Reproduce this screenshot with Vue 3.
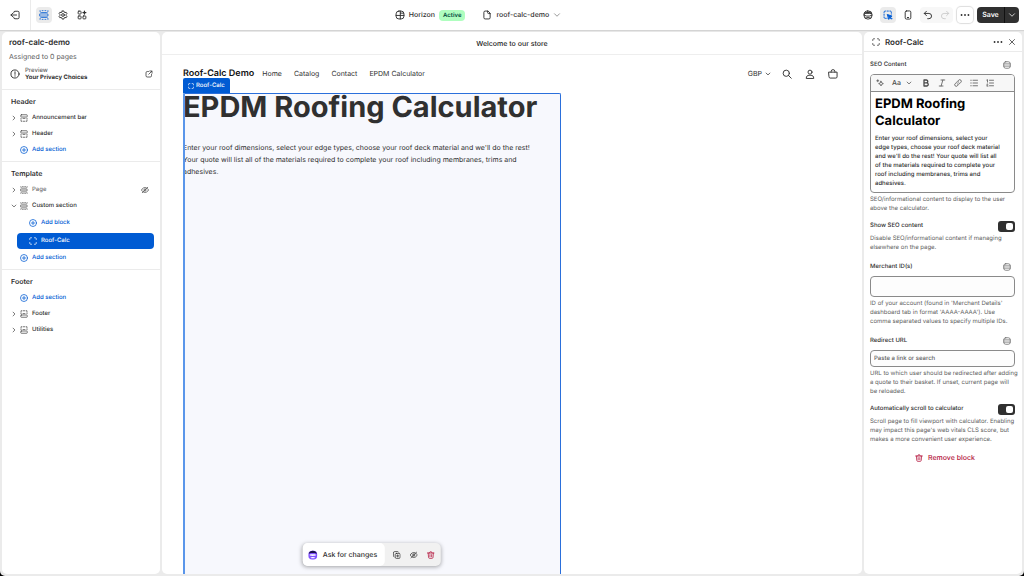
<template>
  <div class="editor">
    <svg class="sprite" aria-hidden="true">
      <symbol id="i-exit" viewBox="0 0 16 16"><path d="M6 4.500V4a2 2 0 0 1 2-2h4.500a2 2 0 0 1 2 2v8a2 2 0 0 1-2 2H8a2 2 0 0 1-2-2v-.5M10.500 8H1.500M4.500 5l-3 3 3 3" /></symbol>
      <symbol id="i-sections" viewBox="0 0 16 16"><path d="M1.700 1v1.200C1.700 3.200 2.500 4 3.500 4h9c1 0 1.800-.8 1.800-1.800V1M1.700 15v-1.200c0-1 .8-1.800 1.800-1.800h9c1 0 1.800.8 1.800 1.800V15M5 1h1.500M9.500 1H11M5 15h1.500M9.500 15H11M1.700 6.300h12.600v3.400H1.700z" stroke-width="1.200" /></symbol>
      <symbol id="i-top" viewBox="0 0 16 16"><rect x="1.500" y="1.500" width="13" height="4.500" rx="1.200" /><path d="M2 8.500v2M2 13v1.500h2M14 8.500v2M14 13v1.500h-2M6.800 14.500h2.400M6 8.800h4" /></symbol>
      <symbol id="i-bottom" viewBox="0 0 16 16"><rect x="1.500" y="10" width="13" height="4.500" rx="1.200" /><path d="M2 7.500v-2M2 3V1.500h2M14 7.500v-2M14 3V1.500h-2M6.800 1.500h2.400M6 7.200h4" /></symbol>
      <symbol id="i-gear" viewBox="0 0 16 16"><path d="M6.700 1.500h2.600l.5 1.900 1.300.8 1.900-.6 1.300 2.300L12.900 7.300v1.400l1.400 1.400-1.300 2.300-1.900-.6-1.300.8-.5 1.900H6.700l-.5-1.900-1.300-.8-1.900.6-1.300-2.300 1.400-1.400V7.300L1.700 5.900 3 3.600l1.900.6 1.300-.8z" /><circle cx="8" cy="8" r="2.200" /></symbol>
      <symbol id="i-apps" viewBox="0 0 16 16"><rect x="1.800" y="1.800" width="4.700" height="4.700" rx="1.200" /><rect x="1.800" y="9.500" width="4.700" height="4.700" rx="1.200" /><rect x="9.500" y="9.500" width="4.700" height="4.700" rx="1.200" /><path d="M11.900 1.800v4.700M9.500 4.150h4.700" stroke-width="2" /></symbol>
      <symbol id="i-theme" viewBox="0 0 16 16"><rect x="1.700" y="1.700" width="12.600" height="12.600" rx="4.500" /><path d="M8.500 1.700v12.600M1.700 8.700h12.600M8.500 5h5.300" /></symbol>
      <symbol id="i-file" viewBox="0 0 16 16"><path d="M9 1.700H5a2 2 0 0 0-2 2v8.600a2 2 0 0 0 2 2h6a2 2 0 0 0 2-2V5.700zM9 1.700v2.500a1.500 1.500 0 0 0 1.500 1.500H13" /></symbol>
      <symbol id="i-down" viewBox="0 0 16 16"><path d="M3 5.500l5 5 5-5" /></symbol>
      <symbol id="i-right" viewBox="0 0 16 16"><path d="M5.500 3l5 5-5 5" /></symbol>
      <symbol id="i-face" viewBox="0 0 16 16"><rect x="1.500" y="1.500" width="13" height="13" rx="6" /><path d="M2 6.500C3.500 2 12.500 2 14 6.500L11 5.300H5z" fill="currentColor" /><path d="M2 8.500l4 1.200h4l4-1.200M4 12.800c2.300-1 5.700-1 8 0" /></symbol>
      <symbol id="i-inspect" viewBox="0 0 16 16"><path d="M1.700 4V3.200c0-.8.700-1.500 1.500-1.500H4M6.500 1.700h2M11 1.700h.8c.8 0 1.500.7 1.500 1.500V4M1.700 6.500v2M1.700 11v.8c0 .8.700 1.500 1.500 1.500H4M13.300 6v.6M6 13.300h.6" /><path d="M7.300 7.300l7.200 2.500-3 1.300 2.800 2.800-.8.800-2.800-2.800-1.200 2.700z" fill="currentColor" /></symbol>
      <symbol id="i-phone" viewBox="0 0 16 16"><rect x="3.500" y="1.500" width="9" height="13" rx="2" /><path d="M7 12h2" /></symbol>
      <symbol id="i-undo" viewBox="0 0 16 16"><path d="M5.500 2L2 5.500 5.500 9M2.300 5.500H9.500a4.200 4.200 0 0 1 0 8.400H7.500" /></symbol>
      <symbol id="i-redo" viewBox="0 0 16 16"><path d="M10.500 2L14 5.500 10.500 9M13.700 5.500H6.500a4.200 4.200 0 0 0 0 8.400H8.500" /></symbol>
      <symbol id="i-dots" viewBox="0 0 16 16"><g fill="currentColor" stroke="none"><circle cx="2.500" cy="8" r="1.500" /><circle cx="8" cy="8" r="1.500" /><circle cx="13.500" cy="8" r="1.500" /></g></symbol>
      <symbol id="i-info" viewBox="0 0 16 16"><circle cx="8" cy="8" r="6.500" /><path d="M8 4.500v4M8 10.800v.7" /></symbol>
      <symbol id="i-external" viewBox="0 0 16 16"><path d="M7 3H4.500A2.500 2.500 0 0 0 2 5.500v6A2.500 2.500 0 0 0 4.500 14h6a2.500 2.500 0 0 0 2.500-2.500V9M9.500 2H14v4.500M13.700 2.300L7.500 8.500" /></symbol>
      <symbol id="i-plus" viewBox="0 0 16 16"><circle cx="8" cy="8" r="7" /><path d="M8 4.800v6.400M4.800 8h6.400" /></symbol>
      <symbol id="i-block" viewBox="0 0 16 16"><path d="M1.500 5V3.500a2 2 0 0 1 2-2H5M11 1.500h1.500a2 2 0 0 1 2 2V5M14.500 11v1.500a2 2 0 0 1-2 2H11M5 14.500H3.500a2 2 0 0 1-2-2V11" /></symbol>
      <symbol id="i-hidden" viewBox="0 0 16 16"><path d="M13.500 2.500l-11 11M10.800 3.600C6.500 1.800 2.500 4.500 1 8c.5 1.200 1.200 2.200 2.100 3M5.200 12.400c4.300 1.800 8.300-.9 9.800-4.400-.5-1.200-1.200-2.200-2.100-3M5.700 8.600a2.400 2.400 0 0 1 2.700-2.900M10.300 7.500a2.400 2.400 0 0 1-2.600 2.800" /></symbol>
      <symbol id="i-search" viewBox="0 0 16 16"><circle cx="6.800" cy="6.800" r="5" /><path d="M10.500 10.500l4.300 4.300" /></symbol>
      <symbol id="i-user" viewBox="0 0 16 16"><circle cx="8" cy="5" r="3.200" /><path d="M2 14.500c0-3 2-4.500 4.500-4.500h3c2.500 0 4.500 1.500 4.500 4.500z" /></symbol>
      <symbol id="i-bag" viewBox="0 0 16 16"><path d="M1.500 5h13v7.500a2 2 0 0 1-2 2h-9a2 2 0 0 1-2-2zM5 5V4a3 3 0 0 1 6 0v1" /></symbol>
      <symbol id="i-close" viewBox="0 0 16 16"><path d="M3 3l10 10M13 3L3 13" /></symbol>
      <symbol id="i-data" viewBox="0 0 16 16"><rect x="1.500" y="1.500" width="13" height="13" rx="4" /><path d="M1.700 5.800h12.600M1.700 10.200h12.600" /></symbol>
      <symbol id="i-magic" viewBox="0 0 16 16"><path d="M10 4.500l1.500 3.200L14.700 9.200l-3.200 1.500L10 13.900l-1.500-3.200L5.300 9.200l3.200-1.500zM3.500 1.500v4M1.500 3.500h4" /></symbol>
      <symbol id="i-bold" viewBox="0 0 16 16"><path d="M4 2h4.700a2.900 2.900 0 0 1 0 5.800H4zM4 7.800h5.400a3.100 3.100 0 0 1 0 6.200H4z" stroke-width="2.600" /></symbol>
      <symbol id="i-italic" viewBox="0 0 16 16"><path d="M6 2h7.500M2.500 14H10M9.800 2L6.200 14" /></symbol>
      <symbol id="i-link" viewBox="0 0 16 16"><path d="M6.200 9.800a3 3 0 0 0 4.300 0l3.200-3.200a3 3 0 0 0-4.300-4.300L8.200 3.500M9.800 6.200a3 3 0 0 0-4.300 0L2.300 9.400a3 3 0 0 0 4.300 4.300l1.200-1.200" /></symbol>
      <symbol id="i-bullets" viewBox="0 0 16 16"><path d="M6 2.500h9M6 8h9M6 13.500h9M1.500 2.500h1M1.500 8h1M1.500 13.500h1" /></symbol>
      <symbol id="i-numbers" viewBox="0 0 16 16"><path d="M7 2.500h8M7 8h8M7 13.500h8M1.500 2l1.500-.7v5M1.500 10c1-1.500 2.800 0 1.500 1.500l-1.500 2.700h2.500" /></symbol>
      <symbol id="i-trash" viewBox="0 0 16 16"><path d="M1.300 4h13.400M5.300 4a2.700 2.700 0 0 1 5.400 0M2.800 4l.7 8.700a2.200 2.200 0 0 0 2.200 2h4.600a2.200 2.200 0 0 0 2.200-2L13.200 4M6.300 7.200v4.300M9.700 7.200v4.300" /></symbol>
      <symbol id="i-copy" viewBox="0 0 16 16"><rect x="4.800" y="4.800" width="10" height="10" rx="2.500" /><path d="M11.500 2.200A2 2 0 0 0 9.800 1.200H4A2.800 2.800 0 0 0 1.200 4v5.800c0 .8.400 1.400 1 1.700M9.800 7.600v4.400M7.600 9.800H12" /></symbol>
    </svg>

    <header class="topbar">
      <div class="topbar-left">
        <button class="exit" aria-label="Exit"><svg class="icon"><use href="#i-exit" /></svg></button>
        <div class="modes">
          <button
            v-for="mode in modes"
            :key="mode.icon"
            class="tool"
            :class="{ active: mode.icon === activeMode }"
            :aria-label="mode.label"
            @click="activeMode = mode.icon"
          >
            <svg class="icon"><use :href="'#i-' + mode.icon" /></svg>
          </button>
        </div>
      </div>

      <div class="topbar-center">
        <svg class="icon"><use href="#i-theme" /></svg>
        <span>Horizon</span>
        <span class="badge">Active</span>
        <button class="template-picker">
          <svg class="icon"><use href="#i-file" /></svg>
          roof-calc-demo
          <svg class="icon small muted"><use href="#i-down" /></svg>
        </button>
      </div>

      <div class="topbar-right">
        <button class="tool" aria-label="Assistant"><svg class="icon"><use href="#i-face" /></svg></button>
        <button class="tool active" aria-label="Inspector"><svg class="icon"><use href="#i-inspect" /></svg></button>
        <button class="tool" aria-label="Mobile view"><svg class="icon"><use href="#i-phone" /></svg></button>
        <div class="history">
          <button class="tool" aria-label="Undo"><svg class="icon"><use href="#i-undo" /></svg></button>
          <button class="tool" aria-label="Redo" disabled><svg class="icon"><use href="#i-redo" /></svg></button>
        </div>
        <button class="tool more" aria-label="More"><svg class="icon"><use href="#i-dots" /></svg></button>
        <div class="save">
          <button class="save-main">Save</button>
          <button class="save-menu" aria-label="Save options"><svg class="icon small"><use href="#i-down" /></svg></button>
        </div>
      </div>
    </header>

    <div class="workspace">
      <aside class="panel sidebar">
        <div class="sidebar-head">
          <h1>roof-calc-demo</h1>
          <p class="assigned">Assigned to 0 pages</p>
          <div class="preview-link">
            <svg class="icon"><use href="#i-info" /></svg>
            <div class="preview-text">
              <span>Preview</span>
              <strong>Your Privacy Choices</strong>
            </div>
            <button aria-label="Open preview"><svg class="icon small"><use href="#i-external" /></svg></button>
          </div>
        </div>

        <section v-for="group in groups" :key="group.title" class="group">
          <h2>{{ group.title }}</h2>
          <button
            v-for="(row, i) in group.rows"
            :key="i"
            class="row"
            :class="[row.kind, { nested: row.nested, dim: row.hidden }]"
          >
            <span class="chevron">
              <svg v-if="row.chevron" class="icon tiny"><use :href="'#i-' + row.chevron" /></svg>
            </span>
            <svg class="icon small"><use :href="'#i-' + row.icon" /></svg>
            <span class="row-label">{{ row.label }}</span>
            <svg v-if="row.hidden" class="icon small"><use href="#i-hidden" /></svg>
          </button>
        </section>
      </aside>

      <main class="panel preview">
        <div class="announcement">Welcome to our store</div>
        <div class="store-header">
          <a href="#" class="brand">Roof-Calc Demo</a>
          <nav>
            <a v-for="link in links" :key="link" href="#">{{ link }}</a>
          </nav>
          <button class="currency">GBP <svg class="icon tiny"><use href="#i-down" /></svg></button>
          <div class="store-icons">
            <button aria-label="Search"><svg class="icon"><use href="#i-search" /></svg></button>
            <button aria-label="Account"><svg class="icon"><use href="#i-user" /></svg></button>
            <button aria-label="Cart"><svg class="icon"><use href="#i-bag" /></svg></button>
          </div>
        </div>

        <div class="block">
          <div class="block-tag"><svg class="icon tiny"><use href="#i-block" /></svg>Roof-Calc</div>
          <h2>EPDM Roofing Calculator</h2>
          <p>{{ intro }}</p>
          <div class="floating">
            <button class="ask">
              <svg class="ask-icon" viewBox="0 0 16 16">
                <rect x="1" y="1" width="14" height="14" rx="6" fill="#8051ff" />
                <path d="M1.500 6C2 2.500 5 1 8 1s6 1.500 6.500 5L11 4.800H5z" fill="#1c1147" />
                <path d="M3 7.500c1.500-1 8.500-1 10 0v1c-1.500 1.200-8.500 1.200-10 0z" fill="#fff" />
                <path d="M4 12.200c2-1.400 6-1.400 8 0-2 1.200-6 1.200-8 0z" fill="#fff" />
              </svg>
              Ask for changes
            </button>
            <button aria-label="Duplicate"><svg class="icon small"><use href="#i-copy" /></svg></button>
            <button aria-label="Hide"><svg class="icon small"><use href="#i-hidden" /></svg></button>
            <button class="danger" aria-label="Remove"><svg class="icon small"><use href="#i-trash" /></svg></button>
          </div>
        </div>
      </main>

      <aside class="panel settings">
        <div class="settings-head">
          <svg class="icon small"><use href="#i-block" /></svg>
          <h2>Roof-Calc</h2>
          <button aria-label="More actions"><svg class="icon"><use href="#i-dots" /></svg></button>
          <button aria-label="Close"><svg class="icon small"><use href="#i-close" /></svg></button>
        </div>

        <div class="settings-body">
          <div class="field">
            <div class="label-row">
              <span id="seo-label">SEO Content</span>
              <button aria-label="Connect data source"><svg class="icon small"><use href="#i-data" /></svg></button>
            </div>
            <div class="rich">
              <div class="rich-bar">
                <button aria-label="Generate text"><svg class="icon small"><use href="#i-magic" /></svg></button>
                <button class="format">Aa <svg class="icon tiny"><use href="#i-down" /></svg></button>
                <button v-for="name in formats" :key="name" :aria-label="name">
                  <svg class="icon small"><use :href="'#i-' + name" /></svg>
                </button>
              </div>
              <div class="rich-text" role="textbox" aria-labelledby="seo-label" contenteditable="true">
                <h3>EPDM Roofing Calculator</h3>
                <p>{{ intro }}</p>
              </div>
            </div>
            <p class="help">SEO/informational content to display to the user above the calculator.</p>
          </div>

          <div class="field switch">
            <div class="label-row">
              <label for="show-seo">Show SEO content</label>
              <input id="show-seo" v-model="showSeo" type="checkbox">
            </div>
            <p class="help">Disable SEO/informational content if managing elsewhere on the page.</p>
          </div>

          <div class="field">
            <div class="label-row">
              <label for="merchant">Merchant ID(s)</label>
              <button aria-label="Connect data source"><svg class="icon small"><use href="#i-data" /></svg></button>
            </div>
            <input id="merchant" v-model="merchantId" class="text tall" type="text">
            <p class="help">ID of your account (found in 'Merchant Details' dashboard tab in format 'AAAA-AAAA'). Use comma&nbsp;separated values to specify multiple IDs.</p>
          </div>

          <div class="field">
            <div class="label-row">
              <label for="redirect">Redirect URL</label>
              <button aria-label="Connect data source"><svg class="icon small"><use href="#i-data" /></svg></button>
            </div>
            <input id="redirect" v-model="redirectUrl" class="text" type="text" placeholder="Paste a link or search">
            <p class="help">URL to which user should be redirected after adding a quote to their basket. If unset, current page will be&nbsp;reloaded.</p>
          </div>

          <div class="field switch">
            <div class="label-row">
              <label for="auto-scroll">Automatically scroll to calculator</label>
              <input id="auto-scroll" v-model="autoScroll" type="checkbox">
            </div>
            <p class="help">Scroll page to fill viewport with calculator. Enabling may impact this page's web vitals CLS score, but makes a more convenient user experience.</p>
          </div>

          <button class="remove"><svg class="icon small"><use href="#i-trash" /></svg>Remove block</button>
        </div>
      </aside>
    </div>
  </div>
</template>

<script setup>
import { ref } from 'vue'

const activeMode = ref('sections')
const showSeo = ref(true)
const autoScroll = ref(true)
const merchantId = ref('')
const redirectUrl = ref('')

const modes = [
  { icon: 'sections', label: 'Sections' },
  { icon: 'gear', label: 'Theme settings' },
  { icon: 'apps', label: 'App embeds' }
]

const links = ['Home', 'Catalog', 'Contact', 'EPDM Calculator']
const formats = ['bold', 'italic', 'link', 'bullets', 'numbers']

const intro = "Enter your roof dimensions, select your edge types, choose your roof deck material and we'll do the rest! Your quote will list all of the materials required to complete your roof including membranes, trims and adhesives."

const addSection = { label: 'Add section', icon: 'plus', kind: 'add' }

const groups = [
  {
    title: 'Header',
    rows: [
      { label: 'Announcement bar', icon: 'top', chevron: 'right' },
      { label: 'Header', icon: 'top', chevron: 'right' },
      addSection
    ]
  },
  {
    title: 'Template',
    rows: [
      { label: 'Page', icon: 'sections', chevron: 'right', hidden: true },
      { label: 'Custom section', icon: 'sections', chevron: 'down' },
      { label: 'Add block', icon: 'plus', kind: 'add', nested: true },
      { label: 'Roof-Calc', icon: 'block', kind: 'selected', nested: true },
      addSection
    ]
  },
  {
    title: 'Footer',
    rows: [
      addSection,
      { label: 'Footer', icon: 'bottom', chevron: 'right' },
      { label: 'Utilities', icon: 'bottom', chevron: 'right' }
    ]
  }
]
</script>

<style>
html {
  background: #000;
}
</style>

<style scoped>
.editor {
  height: 100vh;
  display: flex;
  flex-direction: column;
  overflow: hidden;
  background: #ebebeb;
  border-radius: 0 0 5px 5px;
  color: #303030;
  font-family: Inter, "Liberation Sans", sans-serif;
  font-size: 7px;
  font-weight: 500;
  line-height: 10px;
  text-rendering: geometricPrecision;
}

.editor * {
  box-sizing: border-box;
}

.sprite {
  display: none;
}

h1,
h2,
h3,
p {
  margin: 0;
}

button {
  display: flex;
  align-items: center;
  justify-content: center;
  padding: 0;
  border: 0;
  background: none;
  color: inherit;
  font: inherit;
  text-rendering: inherit;
  cursor: pointer;
}

a {
  color: inherit;
  text-decoration: none;
}

.icon {
  width: 10px;
  height: 10px;
  flex: none;
  fill: none;
  stroke: currentColor;
  stroke-width: 1.5;
  stroke-linecap: round;
  stroke-linejoin: round;
}

.icon.small {
  width: 8px;
  height: 8px;
}

.icon.tiny {
  width: 6px;
  height: 6px;
  stroke-width: 2;
}

.muted {
  color: #777;
}

/* top bar */
.topbar {
  display: flex;
  align-items: center;
  justify-content: space-between;
  height: 30px;
  flex: none;
  padding-right: 5px;
  background: #fff;
  box-shadow: 0 1px 1px #d4d4d4;
}

.topbar-left,
.topbar-right,
.topbar-center,
.modes,
.history {
  display: flex;
  align-items: center;
}

.exit {
  width: 31px;
  height: 30px;
  border-right: 1px solid #ebebeb;
}

.modes {
  gap: 3px;
  padding-left: 5px;
}

.tool {
  width: 16px;
  height: 16px;
  border-radius: 4px;
}

.tool.active {
  background: #ebebeb;
  color: #005bd3;
}

.tool:disabled {
  color: #ccc;
}

.topbar-center {
  gap: 4px;
  padding-left: 6px;
}

.badge {
  padding: 0 4px;
  border-radius: 4px;
  background: #affebf;
  color: #014b40;
  font-size: 6px;
  font-weight: 600;
  line-height: 11px;
}

.template-picker {
  gap: 4px;
  margin-left: 13px;
}

.topbar-right {
  gap: 4px;
}

.history {
  gap: 1px;
  border-radius: 4px;
  background: #f7f7f7;
}

.more {
  box-shadow: 0 0 1px 1px #ddd;
}

.save {
  display: flex;
  height: 16px;
  border-radius: 4px;
  background: #303030;
  color: #fff;
  font-weight: 600;
}

.save-main {
  width: 27px;
}

.save-menu {
  width: 15px;
  border-left: 1px solid #111;
}

/* columns */
.workspace {
  flex: 1;
  min-height: 0;
  display: grid;
  grid-template-columns: 158px minmax(0, 1fr) 158px;
  gap: 2px;
  padding: 2px;
}

.panel {
  overflow: hidden;
  border-radius: 5px;
  background: #fff;
}

/* sidebar */
.sidebar-head {
  padding: 5px 6px 6px 7px;
  border-bottom: 1px solid #ebebeb;
}

.sidebar-head h1 {
  font-size: 8px;
  font-weight: 600;
  line-height: 10px;
}

.assigned {
  margin-top: 5px;
  color: #616161;
  font-weight: 400;
}

.preview-link {
  display: flex;
  align-items: center;
  gap: 5px;
  margin-top: 5px;
  padding: 0 1px 2px;
}

.preview-text {
  display: flex;
  flex-direction: column;
  flex: 1;
  font-size: 6px;
  line-height: 7px;
  color: #616161;
}

.preview-text strong {
  font-weight: 700;
  color: #303030;
}

.group {
  display: flex;
  flex-direction: column;
  padding: 4px 6px 3px 9px;
  border-bottom: 1px solid #ebebeb;
}

.group:last-child {
  border-bottom: 0;
}

.group h2 {
  font-size: 7px;
  font-weight: 600;
  line-height: 16px;
}

.row {
  height: 16px;
  padding-right: 5px;
  border-radius: 4px;
  font-size: 6px;
  text-align: left;
}

.row-label {
  flex: 1;
  margin-left: 4px;
}

.row .icon {
  color: #4a4a4a;
}

.chevron {
  display: flex;
  width: 9px;
  flex: none;
}

.row.dim {
  color: #707070;
}

.row.add,
.row.add .icon {
  color: #005bd3;
}

.row.nested {
  margin: 1px 0 1px 6px;
  padding-left: 3px;
}

.row.selected,
.row.selected .icon {
  color: #fff;
}

.row.selected {
  background: #005bd3;
}

/* store preview */
.preview {
  display: flex;
  flex-direction: column;
}

.announcement {
  flex: none;
  padding-top: 2px;
  border-bottom: 1px solid #eee;
  line-height: 20px;
  text-align: center;
  color: #222;
}

.store-header {
  display: flex;
  align-items: center;
  flex: none;
  height: 38px;
  padding: 0 24px 1px 21px;
  font-weight: 400;
}

.brand {
  font-size: 9px;
  font-weight: 600;
  color: #111;
}

.store-header nav {
  display: flex;
  gap: 12px;
  flex: 1;
  margin-left: 8px;
}

.currency {
  gap: 3px;
}

.store-icons {
  display: flex;
  gap: 13px;
  margin-left: 11px;
}

.block {
  position: relative;
  flex: 1;
  width: 54%;
  margin-left: 21px;
  background: #f7f8fd;
}

.block::after {
  content: '';
  position: absolute;
  inset: 0;
  border: 1px solid #2a6fdb;
  border-width: 1px 1px 0 2px;
  border-left-color: #5a96ea;
  border-radius: 0 2px 0 0;
  pointer-events: none;
}

.block-tag {
  position: absolute;
  left: 0;
  bottom: 100%;
  display: flex;
  align-items: center;
  gap: 2px;
  height: 15px;
  padding: 0 5px;
  border-radius: 2px 2px 0 0;
  background: #005bd3;
  color: #fff;
  font-size: 6px;
}

.block h2 {
  font-size: 29px;
  font-weight: 700;
  line-height: 28px;
  white-space: nowrap;
}

.block p {
  margin-top: 21px;
  padding-right: 21px;
  font-weight: 400;
  line-height: 12px;
}

.floating {
  position: absolute;
  left: 50%;
  bottom: 8px;
  z-index: 1;
  display: flex;
  height: 23px;
  padding-right: 2px;
  transform: translateX(-50%);
  border-radius: 5px;
  background: #f1f1f1;
  box-shadow: 0 1px 4px rgba(0, 0, 0, 0.35);
}

.floating button {
  width: 17px;
}

.floating .ask {
  width: auto;
  gap: 5px;
  margin-right: 3px;
  padding: 0 8px 0 5px;
  border-radius: 5px;
  background: #fff;
  white-space: nowrap;
}

.ask-icon {
  width: 10px;
  height: 10px;
}

.danger,
.remove {
  color: #b3123a;
}

/* settings */
.settings-head {
  display: flex;
  align-items: center;
  gap: 5px;
  height: 20px;
  padding: 0 6px 0 8px;
  border-bottom: 1px solid #ebebeb;
}

.settings-head h2 {
  flex: 1;
  font-size: 8px;
  font-weight: 600;
}

.settings-body {
  padding: 8px 7px 8px 6px;
}

.label-row {
  display: flex;
  align-items: center;
  justify-content: space-between;
  height: 10px;
  font-size: 6px;
}

.label-row button {
  margin-right: 4px;
  color: #616161;
}

.field + .field {
  margin-top: 10px;
}

.field + .switch {
  margin-top: 8px;
}

.help {
  margin: 2px -5px 0 0;
  color: #616161;
  font-size: 6px;
  font-weight: 400;
  line-height: 9px;
}

.switch .help {
  margin-top: 3px;
}

.rich {
  margin-top: 4px;
  overflow: hidden;
  border: 1px solid #8a8a8a;
  border-radius: 4px;
}

.rich-bar {
  display: flex;
  align-items: center;
  gap: 8px;
  height: 17px;
  padding: 0 5px;
  border-bottom: 1px solid #8a8a8a;
  background: #f7f7f7;
  color: #4a4a4a;
}

.format {
  gap: 5px;
  margin-right: 2px;
}

.rich-text {
  padding: 4px;
  outline: none;
}

.rich-text h3 {
  color: #000;
  font-size: 13px;
  font-weight: 700;
  line-height: 17px;
}

.rich-text p {
  margin-top: 4px;
  padding-right: 9px;
  font-size: 6px;
  line-height: 9px;
}

.text {
  display: block;
  width: 100%;
  height: 17px;
  margin-top: 4px;
  padding: 0 3px;
  border: 1px solid #8a8a8a;
  border-radius: 4px;
  background: #fdfdfd;
  color: #303030;
  font: inherit;
  font-size: 6px;
  text-rendering: inherit;
}

.text.tall {
  height: 21px;
}

.text::placeholder {
  color: #616161;
}

.switch input {
  width: 17px;
  height: 11px;
  margin: 0;
  padding: 2px;
  appearance: none;
  border-radius: 3px;
  background: #8a8a8a;
  cursor: pointer;
}

.switch input::before {
  content: '';
  display: block;
  width: 7px;
  height: 7px;
  border-radius: 2px;
  background: #fff;
}

.switch input:checked {
  background: #303030;
}

.switch input:checked::before {
  margin-left: auto;
}

.remove {
  gap: 5px;
  width: 100%;
  height: 12px;
  margin-top: 8px;
  padding-left: 5px;
}
</style>
